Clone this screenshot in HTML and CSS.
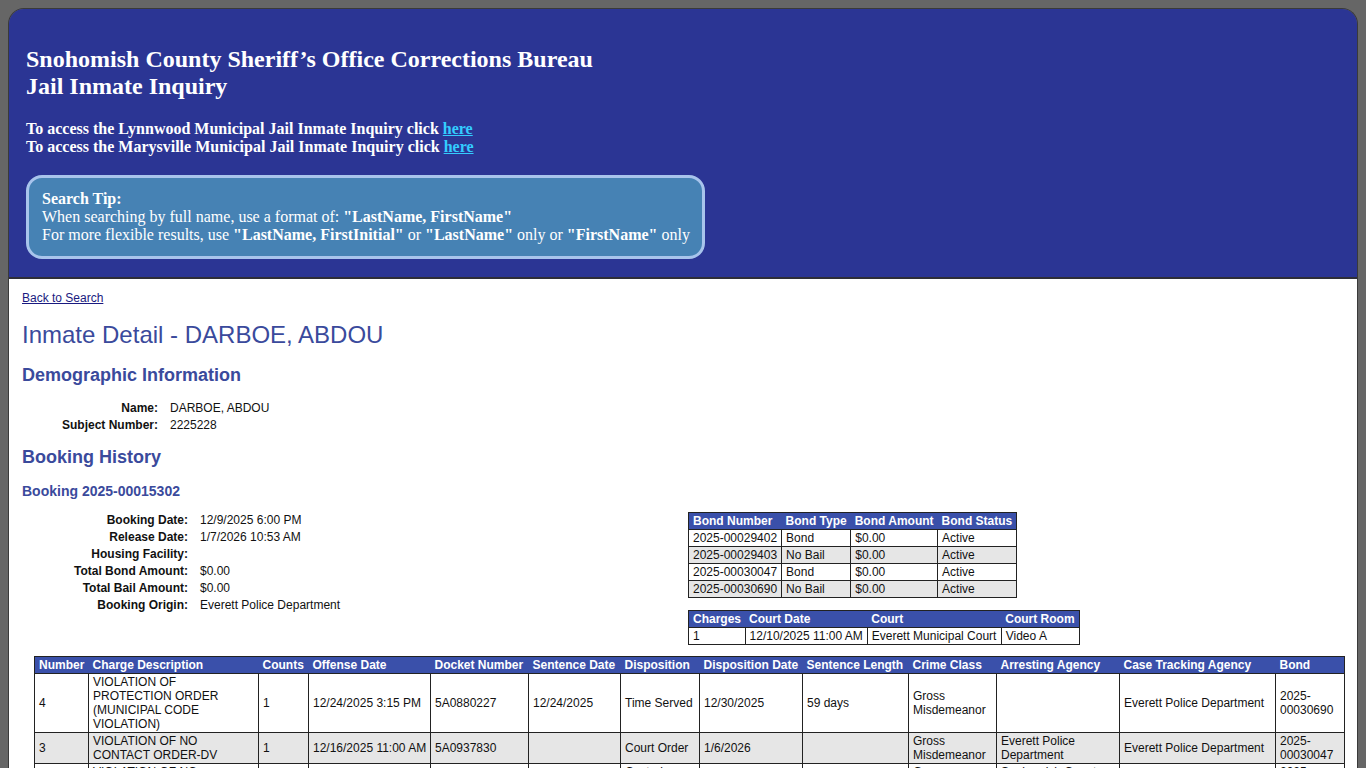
FILE: index.html
```html
<!DOCTYPE html>
<html>
<head>
<meta charset="utf-8">
<title>Jail Inmate Inquiry</title>
<link rel="stylesheet" href="styles.css">
</head>
<body>
<div class="page">
  <div class="header">
    <div class="title">Snohomish County Sheriff’s Office Corrections Bureau<br>Jail Inmate Inquiry</div>
    <div class="links">
      To access the Lynnwood Municipal Jail Inmate Inquiry click <a href="#">here</a><br>
      To access the Marysville Municipal Jail Inmate Inquiry click <a href="#">here</a>
    </div>
    <div class="tip">
      <b>Search Tip:</b><br>
      When searching by full name, use a format of: <b>"LastName, FirstName"</b><br>
      For more flexible results, use <b>"LastName, FirstInitial"</b> or <b>"LastName"</b> only or <b>"FirstName"</b> only
    </div>
  </div>
  <div class="content">
    <a class="back" href="#">Back to Search</a>
    <h1>Inmate Detail - DARBOE, ABDOU</h1>
    <h2>Demographic Information</h2>
    <div class="details demo">
      <div class="lbl">Name:</div><div class="val">DARBOE, ABDOU</div>
      <div class="lbl">Subject Number:</div><div class="val">2225228</div>
    </div>
    <h2 class="bh">Booking History</h2>
    <h3>Booking 2025-00015302</h3>
    <div class="booking">
      <div class="details book">
        <div class="lbl">Booking Date:</div><div class="val">12/9/2025 6:00 PM</div>
        <div class="lbl">Release Date:</div><div class="val">1/7/2026 10:53 AM</div>
        <div class="lbl">Housing Facility:</div><div class="val"></div>
        <div class="lbl">Total Bond Amount:</div><div class="val">$0.00</div>
        <div class="lbl">Total Bail Amount:</div><div class="val">$0.00</div>
        <div class="lbl">Booking Origin:</div><div class="val">Everett Police Department</div>
      </div>
      <div class="side">
        <table class="grid">
          <tr><th>Bond Number</th><th>Bond Type</th><th>Bond Amount</th><th>Bond Status</th></tr>
          <tr><td>2025-00029402</td><td>Bond</td><td>$0.00</td><td>Active</td></tr>
          <tr class="alt"><td>2025-00029403</td><td>No Bail</td><td>$0.00</td><td>Active</td></tr>
          <tr><td>2025-00030047</td><td>Bond</td><td>$0.00</td><td>Active</td></tr>
          <tr class="alt"><td>2025-00030690</td><td>No Bail</td><td>$0.00</td><td>Active</td></tr>
        </table>
        <table class="grid court">
          <tr><th>Charges</th><th>Court Date</th><th>Court</th><th>Court Room</th></tr>
          <tr><td class="c1">1</td><td>12/10/2025 11:00 AM</td><td>Everett Municipal Court</td><td>Video A</td></tr>
        </table>
      </div>
    </div>
    <table class="grid charges">
      <colgroup>
        <col style="width:54px"><col style="width:170px"><col style="width:50px"><col style="width:122px"><col style="width:98px"><col style="width:92px"><col style="width:79px"><col style="width:103px"><col style="width:106px"><col style="width:88px"><col style="width:123px"><col style="width:156px"><col style="width:69px">
      </colgroup>
      <tr><th>Number</th><th>Charge Description</th><th>Counts</th><th>Offense Date</th><th>Docket Number</th><th>Sentence Date</th><th>Disposition</th><th>Disposition Date</th><th>Sentence Length</th><th>Crime Class</th><th>Arresting Agency</th><th>Case Tracking Agency</th><th>Bond</th></tr>
      <tr><td>4</td><td>VIOLATION OF PROTECTION ORDER (MUNICIPAL CODE VIOLATION)</td><td>1</td><td class="nw">12/24/2025 3:15 PM</td><td>5A0880227</td><td>12/24/2025</td><td>Time Served</td><td>12/30/2025</td><td>59 days</td><td>Gross Misdemeanor</td><td></td><td>Everett Police Department</td><td>2025-00030690</td></tr>
      <tr class="alt"><td>3</td><td>VIOLATION OF NO CONTACT ORDER-DV</td><td>1</td><td class="nw">12/16/2025 11:00 AM</td><td>5A0937830</td><td></td><td>Court Order</td><td>1/6/2026</td><td></td><td>Gross Misdemeanor</td><td>Everett Police Department</td><td>Everett Police Department</td><td>2025-00030047</td></tr>
      <tr><td>2</td><td>VIOLATION OF NO CONTACT ORDER-DV</td><td>1</td><td class="nw">12/9/2025 6:00 PM</td><td>5A0880226</td><td></td><td>Custody Transfer</td><td>12/10/2025</td><td></td><td>Gross Misdemeanor</td><td>Snohomish County Sheriff</td><td>Washington State Patrol</td><td>2025-00029403</td></tr>
    </table>
  </div>
</div>
</body>
</html>
```
FILE: styles.css
```css
html, body {
  margin: 0;
  padding: 0;
}
body {
  background: #666666;
  padding: 8px 8px 0 8px;
}
.page {
  border: 1px solid #3a3a3a;
  border-bottom: none;
  border-radius: 16px 16px 0 0;
  overflow: hidden;
}
.header {
  background: #2b3594;
  color: #ffffff;
  font-family: "Liberation Serif", "Times New Roman", serif;
  padding: 37px 18px 18px 17px;
  border-bottom: 2px solid #2e2e38;
}
.title {
  font-size: 24px;
  font-weight: bold;
  line-height: 27px;
}
.links {
  margin-top: 20px;
  font-size: 16px;
  font-weight: bold;
  line-height: 18px;
}
.links a {
  color: #33ccff;
}
.tip {
  display: inline-block;
  margin-top: 19px;
  background: #4682b4;
  border: 3px solid #a8c4ec;
  border-radius: 16px;
  padding: 12px 12px 12px 13px;
  font-size: 16px;
  line-height: 18px;
}
.content {
  background: #ffffff;
  padding: 12px 13px 0 13px;
  font-family: "Liberation Sans", Arial, sans-serif;
  font-size: 12px;
  color: #111111;
}
.back {
  display: block;
  color: #1a1a80;
  font-size: 12px;
  line-height: 14px;
}
h1 {
  margin: 16px 0 0 0;
  font-size: 24px;
  font-weight: normal;
  line-height: 28px;
  color: #3a4a9c;
}
h2 {
  margin: 15px 0 0 0;
  font-size: 18px;
  line-height: 22px;
  color: #3a4a9c;
}
h2.bh {
  margin-top: 12px;
}
h3 {
  margin: 15px 0 0 0;
  font-size: 14px;
  line-height: 16px;
  color: #3a4a9c;
}
.details {
  display: grid;
  column-gap: 12px;
  line-height: 17px;
}
.details .lbl {
  text-align: right;
  font-weight: bold;
}
.demo {
  grid-template-columns: 136px auto;
  margin-top: 14px;
}
.booking {
  display: flex;
  margin-top: 13px;
}
.book {
  grid-template-columns: 166px auto;
  width: 666px;
  align-content: start;
}
.side {
  display: flex;
  flex-direction: column;
  align-items: flex-start;
  gap: 12px;
}
table.grid {
  border-collapse: collapse;
  border: 1px solid #222222;
  font-size: 12px;
  line-height: 14px;
}
table.grid th {
  background: #3a50aa;
  color: #ffffff;
  font-weight: bold;
  text-align: left;
  padding: 1px 4px;
  white-space: nowrap;
}
table.grid td {
  border: 1px solid #222222;
  padding: 1px 4px;
  vertical-align: middle;
}
table.grid tr.alt td {
  background: #e6e6e6;
}
.court th:first-child {
  width: 48px;
}
.court th:nth-child(3) {
  width: 126px;
}
.court td {
  padding: 1px 4px 0 4px;
}
.charges {
  margin: 11px 0 0 12px;
  width: calc(100% - 12px);
  table-layout: fixed;
}
.charges th {
  padding: 1px 2px 0 4px;
}
.charges td {
  padding: 1px 2px 0 4px;
}
.charges td.nw {
  white-space: nowrap;
}
```
